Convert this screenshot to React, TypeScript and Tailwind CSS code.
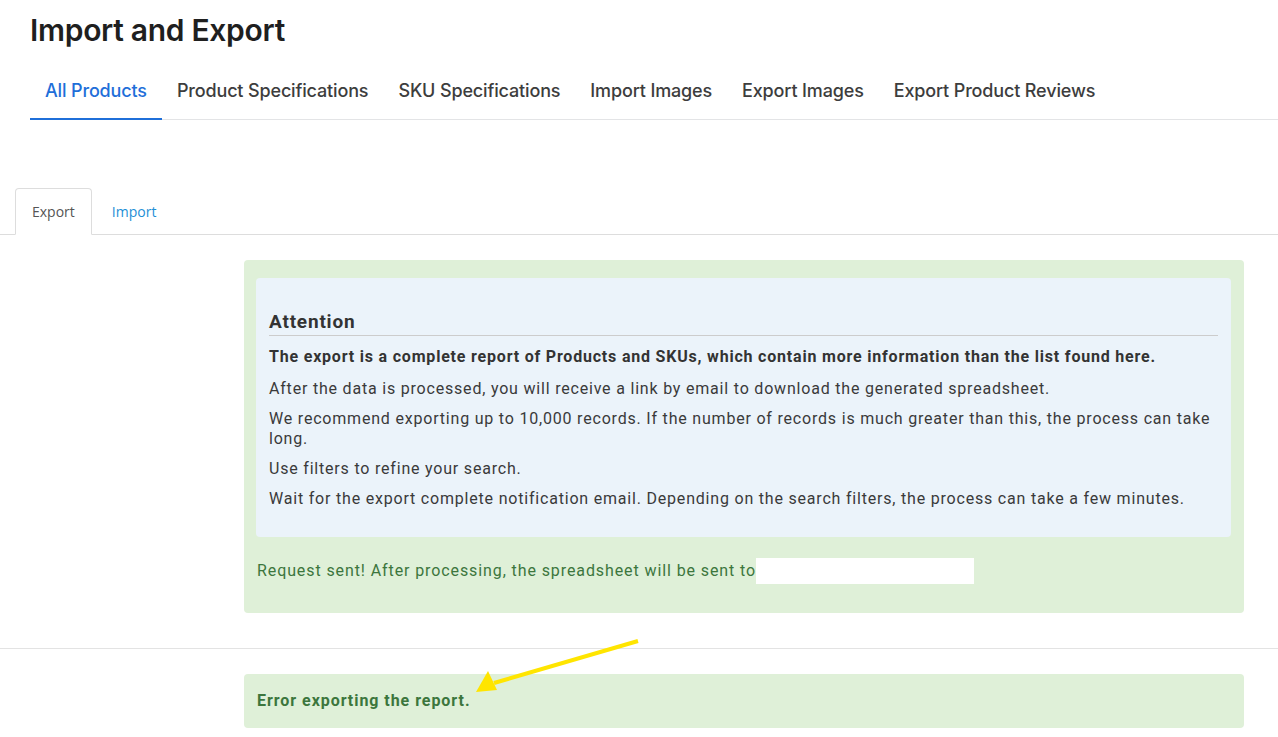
import { useState } from 'react';

const mainTabs = [
  'All Products',
  'Product Specifications',
  'SKU Specifications',
  'Import Images',
  'Export Images',
  'Export Product Reviews',
];

export default function App() {
  const [active, setActive] = useState(0);
  const [sub, setSub] = useState<'export' | 'import'>('export');

  return (
    <div className="relative min-h-[737px] bg-white text-[#3d3d3d]" style={{ fontFamily: 'Inter, Roboto, sans-serif' }}>
      {/* Page header */}
      <div className="px-[30px] pt-[12px]">
        <h1 className="text-[30px] leading-[36px] font-semibold text-[#1f1f1f] tracking-[-0.3px]">Import and Export</h1>
      </div>

      <nav className="ml-[30px] flex border-b border-[#e3e4e6]">
        {mainTabs.map((t, i) => (
          <button
            key={t}
            onClick={() => setActive(i)}
            className={
              'px-[15px] pt-[31px] pb-[15px] -mb-px text-[18px] leading-[24px] tracking-[-0.15px] font-medium border-b-2 ' +
              (i === active ? 'text-[#1f6fd9] border-[#1f6fd9]' : 'text-[#3d3d3d] border-transparent')
            }
          >
            {t}
          </button>
        ))}
      </nav>

      {/* Export / Import tabs */}
      <div className="mt-[68px] pl-[15px] flex border-b border-[#dddddd]" style={{ fontFamily: '"Open Sans", sans-serif' }}>
        <button
          onClick={() => setSub('export')}
          className={
            'h-[47px] px-[16px] -mb-px text-[14px] rounded-t-[4px] border ' +
            (sub === 'export' ? 'border-[#dddddd] border-b-white bg-white text-[#555555]' : 'border-transparent text-[#1e8fd6]')
          }
        >
          Export
        </button>
        <button
          onClick={() => setSub('import')}
          className={
            'ml-[3px] h-[47px] px-[16px] -mb-px text-[14px] rounded-t-[4px] border ' +
            (sub === 'import' ? 'border-[#dddddd] border-b-white bg-white text-[#555555]' : 'border-transparent text-[#1e8fd6]')
          }
        >
          Import
        </button>
      </div>

      <div style={{ fontFamily: 'Roboto, "Liberation Sans", sans-serif' }}>
        <div className="ml-[244px] mr-[34px] mt-[25px] rounded-[4px] bg-[#dff0d8] pl-[12px] pr-[13px] pt-[18px] pb-[29px]">
          <div className="rounded-[4px] bg-[#ebf3fa] px-[13px] pt-[31px] pb-[28px] text-[16px] leading-[20px] tracking-[0.8px] text-[#3a3a3a]">
            <h3 className="text-[19px] leading-[26px] tracking-[0.8px] font-bold border-b border-[#cccccc] text-[#333333]">Attention</h3>
            <p className="mt-[11px] font-bold tracking-[0.8px] text-[#333333]">
              The export is a complete report of Products and SKUs, which contain more information than the list found here.
            </p>
            <p className="mt-[12px]">
              After the data is processed, you will receive a link by email to download the generated spreadsheet.
            </p>
            <p className="mt-[10px]">
              We recommend exporting up to 10,000 records. If the number of records is much greater than this, the process can take long.
            </p>
            <p className="mt-[10px]">Use filters to refine your search.</p>
            <p className="mt-[10px]">
              Wait for the export complete notification email. Depending on the search filters, the process can take a few minutes.
            </p>
          </div>
          <div className="mt-[21px] flex items-center pl-[1px] text-[16px] tracking-[0.9px] text-[#3c763d]">
            <span>Request sent! After processing, the spreadsheet will be sent to</span>
            <span className="inline-block h-[26px] w-[218px] bg-white" />
          </div>
        </div>

        <div className="mt-[35px] border-t border-[#e3e3e3]" />

        <div className="ml-[244px] mr-[34px] mt-[25px] h-[54px] rounded-[4px] bg-[#dff0d8] flex items-center pl-[13px] text-[16px] tracking-[0.95px] font-bold text-[#3c763d]">
          Error exporting the report.
        </div>
      </div>

      {/* Annotation arrow */}
      <svg className="absolute left-0 top-0 pointer-events-none" width="1278" height="737">
        <line x1="638" y1="641" x2="494" y2="683" stroke="#ffe500" strokeWidth="4" />
        <polygon points="476,692 488,671 497,690" fill="#ffe500" />
      </svg>
    </div>
  );
}
